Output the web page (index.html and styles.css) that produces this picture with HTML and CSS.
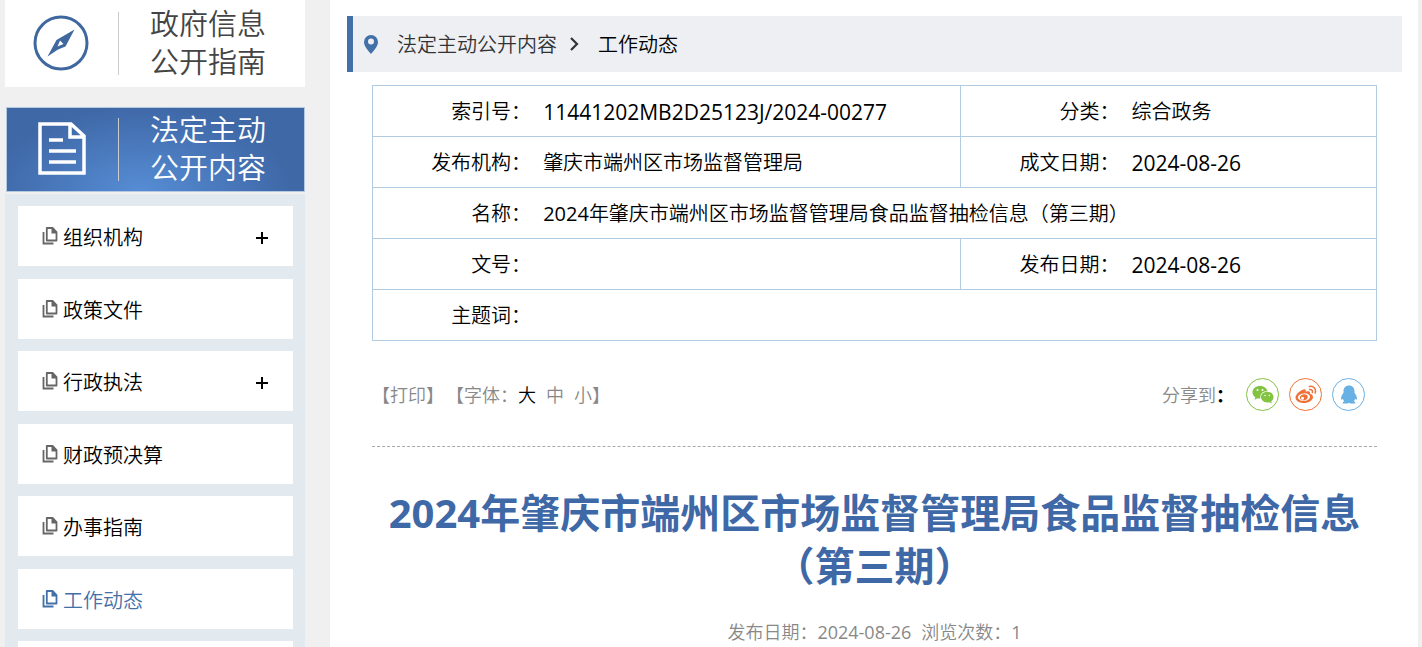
FILE: index.html
```
<!DOCTYPE html>
<html lang="zh-CN">
<head>
<meta charset="utf-8">
<meta name="viewport" content="width=device-width, initial-scale=1">
<title>2024年肇庆市端州区市场监督管理局食品监督抽检信息（第三期）</title>
<link rel="stylesheet" href="styles.css">
</head>
<body>
<svg width="0" height="0" class="sprite" aria-hidden="true">
  <symbol id="pages" viewBox="0 0 16 18">
    <path d="M1.500 5v11.500h10" fill="none" stroke="currentColor" stroke-width="1.800"/>
    <path d="M4.800 1h6l3.700 4v8.500H4.800z" fill="none" stroke="currentColor" stroke-width="1.800" stroke-linejoin="round"/>
    <path d="M9.500 1v5.500h5V5l-3.700-4z" fill="currentColor"/>
  </symbol>
</svg>
<div class="page">
  <aside class="sidebar">
    <a class="tab" href="#">
      <span class="tab-icon">
        <svg width="56" height="56" viewBox="0 0 56 56" aria-hidden="true">
          <circle cx="28" cy="28" r="26" fill="none" stroke="#3f689f" stroke-width="3"/>
          <path fill="#3f689f" fill-rule="evenodd" d="M41.500 14.500 32.500 31.500 25 34.500 14.500 41.500 23.500 25zM27 25.500 24.500 31.500 30.500 29z"/>
        </svg>
      </span>
      <span class="tab-text">政府信息公开指南</span>
    </a>
    <a class="tab tab-active" href="#">
      <span class="tab-icon">
        <svg width="48" height="54" viewBox="0 0 48 54" fill="none" stroke="#fff" stroke-width="3.500" aria-hidden="true">
          <path d="M2 2h31l13 12v37H2zM32 2v13h14M11 18h14M11 29h27M11 40h27"/>
        </svg>
      </span>
      <span class="tab-text">法定主动公开内容</span>
    </a>
    <ul class="menu">
      <li class="item"><a href="#"><svg class="doc" aria-hidden="true"><use href="#pages"/></svg>组织机构</a><button class="plus" aria-label="展开组织机构"></button></li>
      <li class="item"><a href="#"><svg class="doc" aria-hidden="true"><use href="#pages"/></svg>政策文件</a></li>
      <li class="item"><a href="#"><svg class="doc" aria-hidden="true"><use href="#pages"/></svg>行政执法</a><button class="plus" aria-label="展开行政执法"></button></li>
      <li class="item"><a href="#"><svg class="doc" aria-hidden="true"><use href="#pages"/></svg>财政预决算</a></li>
      <li class="item"><a href="#"><svg class="doc" aria-hidden="true"><use href="#pages"/></svg>办事指南</a></li>
      <li class="item current"><a href="#"><svg class="doc" aria-hidden="true"><use href="#pages"/></svg>工作动态</a></li>
      <li class="item"></li>
    </ul>
  </aside>
  <main class="main">
    <nav class="crumbs">
      <svg width="14" height="19" viewBox="0 0 14 19" aria-hidden="true"><path fill="#4470a8" fill-rule="evenodd" d="M7 0a7 7 0 0 1 7 7c0 4-3.500 8-7 12C3.500 15 0 11 0 7a7 7 0 0 1 7-7zm0 3.500a3 3 0 1 0 0 6 3 3 0 0 0 0-6z"/></svg>
      <a class="crumb" href="#">法定主动公开内容</a>
      <svg width="10" height="14" viewBox="0 0 10 14" aria-hidden="true"><path d="M2 1l6 6-6 6" fill="none" stroke="#333" stroke-width="2.200"/></svg>
      <a class="crumb here" href="#">工作动态</a>
    </nav>
    <article class="content">
      <table class="info">
        <colgroup><col class="c-label"><col class="c-wide"><col class="c-label"><col></colgroup>
        <tr><th>索引号：</th><td class="num">11441202MB2D25123J/2024-00277</td><th class="split">分类：</th><td>综合政务</td></tr>
        <tr><th>发布机构：</th><td>肇庆市端州区市场监督管理局</td><th class="split">成文日期：</th><td class="num">2024-08-26</td></tr>
        <tr><th>名称：</th><td colspan="3"><span class="digits">2024</span>年肇庆市端州区市场监督管理局食品监督抽检信息（第三期）</td></tr>
        <tr><th>文号：</th><td></td><th class="split">发布日期：</th><td class="num">2024-08-26</td></tr>
        <tr><th>主题词：</th><td colspan="3"></td></tr>
      </table>
      <div class="tools">
        <div class="tools-left">
          <span>【<button class="txt">打印</button>】</span>
          <span class="sizes">【字体：<button class="txt on">大</button><button class="txt">中</button><button class="txt">小</button>】</span>
        </div>
        <div class="share">
          <span>分享到<b class="colon">：</b></span>
          <a class="round wechat" href="#" aria-label="微信"><svg width="22" height="20" viewBox="0 0 22 20" aria-hidden="true">
            <path fill="#82c341" d="M8 1C3.600 1 .5 3.700.5 7.300c0 2 1 3.700 2.800 4.900l-.8 2.500 3-1.500c1 .3 2 .4 3 .3C7.500 9 11 6 15.500 6 14.700 3 11.700 1 8 1z"/>
            <path fill="#82c341" d="M15.200 6.800c-3.500 0-6.200 2.300-6.200 5.300s2.700 5.400 6.200 5.400c.8 0 1.500-.1 2.200-.3l2.500 1.300-.7-2.100c1.500-1 2.300-2.500 2.300-4.300 0-3-2.800-5.300-6.300-5.300z"/>
            <g fill="#fff"><circle cx="5.500" cy="5" r="1"/><circle cx="10.500" cy="5" r="1"/><circle cx="13" cy="10.500" r=".8"/><circle cx="17.300" cy="10.500" r=".8"/></g></svg></a>
          <a class="round weibo" href="#" aria-label="微博"><svg width="22" height="20" viewBox="0 0 22 20" aria-hidden="true">
            <path fill="#ee7238" fill-rule="evenodd" d="M8.500 4.500c1.700-.7 2.700.2 2.200 2.200 2.700-1 5-.5 4.300 2 2 .6 3 1.700 3 3.300 0 3.300-4.200 6-9 6S.5 15.800.5 12.500c0-3 4.500-7 8-8zM8.700 8.400c-3.500.3-6 2.200-5.700 4.400.2 2.100 3 3.500 6.300 3.200 3.400-.3 6-2.300 5.700-4.500-.2-2-3-3.400-6.300-3.100z"/>
            <path fill="#ee7238" fill-rule="evenodd" d="M8.800 9.200c2.300-.2 4 1 4 2.700 0 1.800-1.700 3.300-4 3.500-2.300.1-4-1.100-4-2.800s1.700-3.200 4-3.400zM7.400 11.700a1.500 1.500 0 1 0 .1 3 1.500 1.500 0 0 0-.1-3z"/>
            <path d="M14.500 1.500c4-.8 7 2.500 5.700 6.500M14.700 4.600c2-.3 3.300 1 2.700 3" fill="none" stroke="#ee7238" stroke-width="1.500" stroke-linecap="round"/></svg></a>
          <a class="round qq" href="#" aria-label="QQ"><svg width="22" height="20" viewBox="0 0 22 20" aria-hidden="true">
            <path fill="#68b1e5" d="M11 .5c3.500 0 5.500 2.600 5.500 5.700v1.600c1.500 2 2.500 4.200 2.500 5.800 0 1.400-.8 1.500-1.700.1-.3 1-.8 1.800-1.500 2.500 1.300.6 1.700 1.200 1.500 2.300h-5L11 17.800l-1.300.7h-5c-.2-1.100.2-1.700 1.500-2.300-.7-.7-1.200-1.500-1.500-2.500-.9 1.400-1.700 1.300-1.700-.1 0-1.600 1-3.800 2.500-5.800V6.200C5.500 3.100 7.500.5 11 .5z"/></svg></a>
        </div>
      </div>
      <h1 class="title">2024年肇庆市端州区市场监督管理局食品监督抽检信息（第三期）</h1>
      <p class="meta"><span>发布日期：<span class="digits">2024-08-26</span></span><span>浏览次数：<span class="digits">1</span></span></p>
    </article>
  </main>
</div>
</body>
</html>
```
FILE: styles.css
```
* { box-sizing: border-box; }
body {
  margin: 0;
  background: #f0f0f0;
  color: #000;
  font: 350 20px/30px "Open Sans", "Noto Sans CJK SC", sans-serif;
}
a { color: inherit; text-decoration: none; }
button { border: 0; padding: 0; background: none; font: inherit; color: inherit; cursor: pointer; }
.sprite { position: absolute; }
.digits { font-weight: 400; }
.page { display: flex; height: 100vh; overflow: hidden; padding: 0 4px 0 5px; gap: 25px; }

.sidebar { flex: 0 0 300px; }
.tab {
  display: flex;
  align-items: center;
  height: 87px;
  margin-bottom: 20px;
  padding-bottom: 1px;
  background: #fff;
  color: #444;
  font-size: 29px;
  line-height: 38px;
}
.tab-icon {
  display: flex;
  align-items: center;
  justify-content: center;
  width: 114px;
  height: 63px;
  padding-right: 2px;
  border-right: 1px solid #ccc;
}
.tab-text { width: 118px; margin-left: 31px; }
.tab-active {
  height: 85px;
  margin: 0 0 2px 1px;
  border: 1px solid #b4c8e2;
  background: radial-gradient(ellipse 150px 84px at 45% 100%, #568dd5, #3f68a7);
  color: #fff;
}
.tab-active .tab-icon { width: 112px; }

.menu { margin: 0; padding: 12px 12px 12px 13px; list-style: none; background: #e2eaf0; }
.item {
  display: flex;
  align-items: center;
  justify-content: space-between;
  height: 60px;
  margin-bottom: 12px;
  padding: 3px 25px 0 24px;
  background: #fff;
}
.item:nth-child(odd) { margin-bottom: 13px; }
.item a { display: flex; align-items: center; gap: 5px; }
.doc { width: 16px; height: 18px; margin-bottom: 3px; color: #666; }
.current, .current .doc { color: #4470a8; }
.plus {
  width: 12px;
  height: 12px;
  background: linear-gradient(#000, #000) center / 12px 2px no-repeat, linear-gradient(#000, #000) center / 2px 12px no-repeat;
}

.main { flex: 1; padding: 16px 16px 0 17px; background: #fff; }
.crumbs {
  display: flex;
  align-items: center;
  height: 56px;
  padding-left: 11px;
  border-left: 6px solid #4470a8;
  background: #edeff3;
}
.crumb { margin: 0 12px 0 19px; padding-top: 2px; color: #333; }
.here { color: #000; }
.content { margin: 13px 25px 0; }
.info { width: 100%; border-collapse: collapse; table-layout: fixed; border: 1px solid #b1cbe3; }
.info tr { height: 51px; border-bottom: 1px solid #b1cbe3; }
.info th { padding: 2px 0 0; font-weight: inherit; text-align: right; }
.info td { padding: 2px 0 0 12px; }
.info .split { border-left: 1px solid #b1cbe3; }
.info .num { font-size: 21px; font-weight: 400; }
.c-label { width: 15.8%; }
.c-wide { width: 42.8%; }

.tools {
  display: flex;
  align-items: center;
  justify-content: space-between;
  height: 106px;
  padding: 2px 12px 0 0;
  border-bottom: 1px dashed #aaa;
  color: #888;
  font-size: 18px;
}
.tools-left { display: flex; gap: 2px; }
.txt + .txt { margin-left: 10px; }
.on { color: #000; }
.share { display: flex; align-items: center; gap: 10px; }
.share span { margin-right: 2px; }
.colon { color: #000; }
.round {
  display: flex;
  align-items: center;
  justify-content: center;
  width: 33px;
  height: 33px;
  border: 1px solid;
  border-radius: 50%;
}
.wechat { color: #82c341; }
.weibo { color: #ee7238; }
.qq { color: #68b1e5; }

.title { margin: 39px 0 0; color: #3f68a7; font-size: 40px; line-height: 53px; font-weight: 700; text-align: center; }
.meta { display: flex; justify-content: center; gap: 10px; margin: 25px 0 0; color: #888; font-size: 18px; }
```
